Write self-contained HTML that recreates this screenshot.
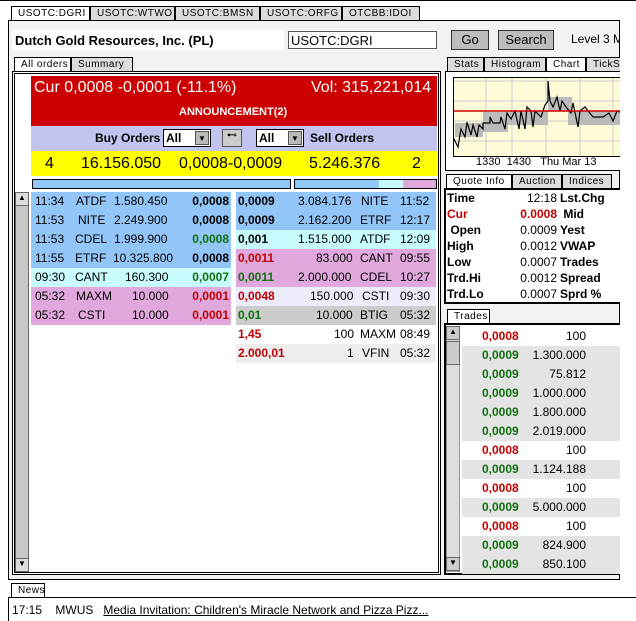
<!DOCTYPE html><html><head><style>
*{margin:0;padding:0;box-sizing:border-box}
body{width:636px;height:621px;background:#fff;font-family:"Liberation Sans",sans-serif;font-size:12px;position:relative;overflow:hidden}
.a{position:absolute}
.tab{position:absolute;height:14px;border:1px solid #000;border-bottom:none;background:#ddd;font-size:10px;letter-spacing:.5px;padding:1px 0 0 6px;white-space:nowrap}
.tab.on{background:#fff}
.b{font-weight:bold}
.row{position:absolute;height:19px;font-size:12px;line-height:19px;white-space:nowrap;overflow:hidden}
.row span{position:absolute}
.r{color:#c00000}.g{color:#107010}
.sb{position:absolute;background:#ccc;border:1px solid #666}
.btn{position:absolute;background:#bdbdbd;border:1px solid #333;font-size:13px;text-align:center;line-height:18px}
</style></head><body>
<div class="a" style="left:0;top:0;width:636px;height:2px;border-top:1px solid #000"></div>
<div class="a" style="left:8px;top:20px;width:612px;height:560px;background:#f2f2f2;border:1px solid #000"></div>
<div class="tab on" style="left:11px;top:6px;width:79px">USOTC:DGRI</div>
<div class="tab" style="left:90px;top:6px;width:85px">USOTC:WTWO</div>
<div class="tab" style="left:175px;top:6px;width:85px">USOTC:BMSN</div>
<div class="tab" style="left:260px;top:6px;width:82px">USOTC:ORFG</div>
<div class="tab" style="left:342px;top:6px;width:78px">OTCBB:IDOI</div>
<div class="a" style="left:12px;top:30px;width:272px;height:20px;background:#fff"></div>
<div class="a b" style="left:15px;top:33px;font-size:13px">Dutch Gold Resources, Inc. (PL)</div>
<div class="a" style="left:288px;top:31px;width:149px;height:18px;background:#fff;border:1px solid #555;font-size:13px;padding:1px 2px">USOTC:DGRI</div>
<div class="btn" style="left:451px;top:30px;width:38px;height:20px">Go</div>
<div class="btn" style="left:498px;top:30px;width:56px;height:20px">Search</div>
<div class="a" style="left:571px;top:32px;font-size:12px;white-space:nowrap">Level 3 M</div>
<div class="tab on" style="left:14px;top:57px;width:57px">All orders</div>
<div class="tab" style="left:71px;top:57px;width:62px">Summary</div>
<div class="a" style="left:12px;top:71px;width:429px;height:504px;background:#fff;border:3px double #000"></div>
<div class="a" style="left:31px;top:76px;width:406px;height:50px;background:#cc0000"></div>
<div class="a" style="left:34px;top:79px;color:#fff;font-size:16px">Cur 0,0008 -0,0001 (-11.1%)</div>
<div class="a" style="left:311px;top:79px;color:#fff;font-size:16px">Vol: 315,221,014</div>
<div class="a b" style="left:179px;top:106px;color:#fff;font-size:11px">ANNOUNCEMENT(2)</div>
<div class="a" style="left:31px;top:126px;width:406px;height:25px;background:#c0c4ee"></div>
<div class="a b" style="left:95px;top:131px;font-size:12px">Buy Orders</div>
<div class="a b" style="left:163px;top:129px;width:48px;height:18px;background:#fff;border:1px solid #000;font-size:12px;padding:1px 2px">All<div class="a" style="right:1px;top:1px;width:14px;height:14px;background:#bbb;border:1px solid #555;font-size:8px;text-align:center;line-height:13px">▼</div></div>
<div class="a" style="left:222px;top:129px;width:20px;height:18px;background:#ccc;border:1px solid #555;font-size:10px;text-align:center">⊷</div>
<div class="a b" style="left:256px;top:129px;width:48px;height:18px;background:#fff;border:1px solid #000;font-size:12px;padding:1px 2px">All<div class="a" style="right:1px;top:1px;width:14px;height:14px;background:#bbb;border:1px solid #555;font-size:8px;text-align:center;line-height:13px">▼</div></div>
<div class="a b" style="left:310px;top:131px;font-size:12px">Sell Orders</div>
<div class="a" style="left:31px;top:151px;width:406px;height:25px;background:#ffff00;font-size:16px;line-height:25px">
<span class="a" style="left:14px">4</span><span class="a" style="left:50px">16.156.050</span><span class="a" style="left:148px">0,0008-0,0009</span><span class="a" style="left:278px">5.246.376</span><span class="a" style="left:381px">2</span></div>
<div class="a" style="left:32px;top:179px;width:259px;height:10px;background:#92c6f8;border:1px solid #000"></div>
<div class="a" style="left:294px;top:179px;width:143px;height:10px;background:#92c6f8;border:1px solid #000"><div class="a" style="left:84px;top:0;width:24px;height:8px;background:#c8fcfc"></div><div class="a" style="left:108px;top:0;width:33px;height:8px;background:#e0a8dc"></div></div>
<div class="sb" style="left:15px;top:192px;width:14px;height:380px;background:#c8c8c8"></div>
<div class="sb" style="left:15px;top:192px;width:14px;height:14px;background:#ddd;font-size:8px;text-align:center">▲</div>
<div class="sb" style="left:15px;top:558px;width:14px;height:14px;background:#ddd;font-size:8px;text-align:center">▼</div>
<div class="row" style="left:31px;top:192px;width:200px;background:#92c6f8"><span style="left:4px">11:34</span><span style="left:45px">ATDF</span><span style="left:83px">1.580.450</span><span class="b" style="right:2px">0,0008</span></div>
<div class="row" style="left:31px;top:211px;width:200px;background:#92c6f8"><span style="left:4px">11:53</span><span style="left:47px">NITE</span><span style="left:83px">2.249.900</span><span class="b" style="right:2px">0,0008</span></div>
<div class="row" style="left:31px;top:230px;width:200px;background:#92c6f8"><span style="left:4px">11:53</span><span style="left:44px">CDEL</span><span style="left:83px">1.999.900</span><span class="b g" style="right:2px">0,0008</span></div>
<div class="row" style="left:31px;top:249px;width:200px;background:#92c6f8"><span style="left:4px">11:55</span><span style="left:44px">ETRF</span><span style="left:82px;width:70px;overflow:hidden">10.325.800</span><span class="b" style="right:2px">0,0008</span></div>
<div class="row" style="left:31px;top:268px;width:200px;background:#c8fcfc"><span style="left:4px">09:30</span><span style="left:44px">CANT</span><span style="left:94px">160.300</span><span class="b g" style="right:2px">0,0007</span></div>
<div class="row" style="left:31px;top:287px;width:200px;background:#e0a8dc"><span style="left:4px">05:32</span><span style="left:45px">MAXM</span><span style="left:101px">10.000</span><span class="b r" style="right:2px">0,0001</span></div>
<div class="row" style="left:31px;top:306px;width:200px;background:#e0a8dc"><span style="left:4px">05:32</span><span style="left:47px">CSTI</span><span style="left:101px">10.000</span><span class="b r" style="right:2px">0,0001</span></div>
<div class="row" style="left:236px;top:192px;width:200px;background:#92c6f8"><span class="b" style="left:2px">0,0009</span><span style="left:62px">3.084.176</span><span style="left:125px">NITE</span><span style="left:164px">11:52</span></div>
<div class="row" style="left:236px;top:211px;width:200px;background:#92c6f8"><span class="b" style="left:2px">0,0009</span><span style="left:62px">2.162.200</span><span style="left:124px">ETRF</span><span style="left:164px">12:17</span></div>
<div class="row" style="left:236px;top:230px;width:200px;background:#c8fcfc"><span class="b" style="left:2px">0,001</span><span style="left:62px">1.515.000</span><span style="left:124px">ATDF</span><span style="left:164px">12:09</span></div>
<div class="row" style="left:236px;top:249px;width:200px;background:#e0a8dc"><span class="b r" style="left:2px">0,0011</span><span style="left:80px">83.000</span><span style="left:124px">CANT</span><span style="left:164px">09:55</span></div>
<div class="row" style="left:236px;top:268px;width:200px;background:#e0a8dc"><span class="b g" style="left:2px">0,0011</span><span style="left:62px">2.000.000</span><span style="left:124px">CDEL</span><span style="left:164px">10:27</span></div>
<div class="row" style="left:236px;top:287px;width:200px;background:#ececfa"><span class="b r" style="left:2px">0,0048</span><span style="left:74px">150.000</span><span style="left:126px">CSTI</span><span style="left:164px">09:30</span></div>
<div class="row" style="left:236px;top:306px;width:200px;background:#cccccc"><span class="b g" style="left:2px">0,01</span><span style="left:80px">10.000</span><span style="left:124px">BTIG</span><span style="left:164px">05:32</span></div>
<div class="row" style="left:236px;top:325px;width:200px;background:#fff"><span class="b r" style="left:2px">1,45</span><span style="left:98px">100</span><span style="left:124px">MAXM</span><span style="left:164px">08:49</span></div>
<div class="row" style="left:236px;top:344px;width:200px;background:#eee"><span class="b r" style="left:2px">2.000,01</span><span style="left:111px">1</span><span style="left:126px">VFIN</span><span style="left:164px">05:32</span></div>
<div class="tab" style="left:447px;top:57px;width:37px">Stats</div>
<div class="tab" style="left:484px;top:57px;width:62px">Histogram</div>
<div class="tab on" style="left:546px;top:57px;width:40px">Chart</div>
<div class="tab" style="left:586px;top:57px;width:40px">TickS</div>
<div class="a" style="left:445px;top:71px;width:180px;height:100px;background:#fff;border:1px solid #000"></div>
<svg class="a" style="left:453px;top:77px" width="170" height="80">
<rect width="170" height="80" fill="#fffbd8"/>
<g stroke="#ccc" stroke-width="1"><line x1="33" y1="0" x2="33" y2="80"/><line x1="59" y1="0" x2="59" y2="80"/><line x1="93" y1="0" x2="93" y2="80"/><line x1="127" y1="0" x2="127" y2="80"/><line x1="160" y1="0" x2="160" y2="80"/><line x1="0" y1="4" x2="170" y2="4"/><line x1="0" y1="24" x2="170" y2="24"/><line x1="0" y1="44" x2="170" y2="44"/><line x1="0" y1="64" x2="170" y2="64"/></g>
<g fill="#bbb"><rect x="2" y="46" width="28" height="14"/><rect x="30" y="35" width="25" height="20"/><rect x="55" y="34" width="40" height="14"/><rect x="95" y="20" width="24" height="14"/><rect x="115" y="34" width="55" height="14"/></g>
<polyline fill="none" stroke="#000" stroke-width="1.2" points="0,75 0,60 5,70 8,52 12,60 14,45 18,58 20,48 24,60 26,48 30,52 30,46 37,46 37,40 40,46 47,46 48,40 52,52 54,36 58,42 62,34 66,52 68,34 72,52 74,30 78,34 80,50 82,34 88,40 92,28 95,24 95,4 97,24 100,30 104,20 107,34 109,24 113,30 118,36 120,26 125,50 127,34 132,30 140,40 150,40 156,36 160,44 164,34 170,36"/>
<line x1="0" y1="34" x2="170" y2="34" stroke="#d00000" stroke-width="1.5"/>
<rect x="0.5" y="0.5" width="169" height="79" fill="none" stroke="#000"/>
</svg>
<div class="a" style="left:476px;top:156px;font-size:11px;white-space:nowrap">1330&nbsp;&nbsp;1430&nbsp;&nbsp;&nbsp;Thu Mar 13&nbsp;&nbsp;&nbsp;&nbsp;&nbsp;&nbsp;&nbsp;&nbsp;&nbsp;1130</div>
<div class="tab on" style="left:446px;top:174px;width:66px">Quote Info</div>
<div class="tab" style="left:512px;top:174px;width:50px">Auction</div>
<div class="tab" style="left:562px;top:174px;width:50px">Indices</div>
<div class="a" style="left:444px;top:188px;width:180px;height:116px;background:#fff;border:2px solid #000"></div>
<div class="a" style="left:447px;top:190px;font-size:12px;line-height:16px;width:175px">
<div class="b">Time</div><div class="b r">Cur</div><div class="b">&nbsp;Open</div><div class="b">High</div><div class="b">Low</div><div class="b">Trd.Hi</div><div class="b">Trd.Lo</div></div>
<div class="a" style="left:490px;top:190px;font-size:12px;line-height:16px;width:67px;text-align:right">
<div>12:18</div><div class="b r">0.0008</div><div>0.0009</div><div>0.0012</div><div>0.0007</div><div>0.0012</div><div>0.0007</div></div>
<div class="a b" style="left:560px;top:190px;font-size:12px;line-height:16px;white-space:nowrap">
<div>Lst.Chg</div><div>&nbsp;Mid</div><div>Yest</div><div>VWAP</div><div>Trades</div><div>Spread</div><div>Sprd %</div></div>
<div class="tab on" style="left:447px;top:309px;width:43px">Trades</div>
<div class="a" style="left:444px;top:323px;width:180px;height:252px;background:#fff;border:2px solid #000"></div>
<div class="sb" style="left:446px;top:326px;width:14px;height:246px;background:#ddd;border-color:#999"></div>
<div class="sb" style="left:446px;top:326px;width:14px;height:14px;font-size:8px;text-align:center">▲</div>
<div class="sb" style="left:446px;top:341px;width:14px;height:24px"></div>
<div class="sb" style="left:446px;top:557px;width:14px;height:14px;font-size:8px;text-align:center">▼</div>
<div class="a" style="left:462px;top:327px;width:160px">
<div class="row" style="position:relative;background:#fff"><span class="b r" style="left:20px">0,0008</span><span style="right:36px">100</span></div>
<div class="row" style="position:relative;background:#e4e4e4"><span class="b g" style="left:20px">0,0009</span><span style="right:36px">1.300.000</span></div>
<div class="row" style="position:relative;background:#e4e4e4"><span class="b g" style="left:20px">0,0009</span><span style="right:36px">75.812</span></div>
<div class="row" style="position:relative;background:#e4e4e4"><span class="b g" style="left:20px">0,0009</span><span style="right:36px">1.000.000</span></div>
<div class="row" style="position:relative;background:#e4e4e4"><span class="b g" style="left:20px">0,0009</span><span style="right:36px">1.800.000</span></div>
<div class="row" style="position:relative;background:#e4e4e4"><span class="b g" style="left:20px">0,0009</span><span style="right:36px">2.019.000</span></div>
<div class="row" style="position:relative;background:#fff"><span class="b r" style="left:20px">0,0008</span><span style="right:36px">100</span></div>
<div class="row" style="position:relative;background:#e4e4e4"><span class="b g" style="left:20px">0,0009</span><span style="right:36px">1.124.188</span></div>
<div class="row" style="position:relative;background:#fff"><span class="b r" style="left:20px">0,0008</span><span style="right:36px">100</span></div>
<div class="row" style="position:relative;background:#e4e4e4"><span class="b g" style="left:20px">0,0009</span><span style="right:36px">5.000.000</span></div>
<div class="row" style="position:relative;background:#fff"><span class="b r" style="left:20px">0,0008</span><span style="right:36px">100</span></div>
<div class="row" style="position:relative;background:#e4e4e4"><span class="b g" style="left:20px">0,0009</span><span style="right:36px">824.900</span></div>
<div class="row" style="position:relative;background:#e4e4e4"><span class="b g" style="left:20px">0,0009</span><span style="right:36px">850.100</span></div>
</div>
<div class="a" style="left:620px;top:20px;width:16px;height:601px;background:#fff"></div>
<div class="tab on" style="left:11px;top:583px;width:34px">News</div>
<div class="a" style="left:8px;top:597px;width:628px;height:24px;border-top:1px solid #000;border-left:1px solid #000;background:#fff"></div>
<div class="a" style="left:12px;top:603px;font-size:12px;white-space:nowrap">17:15&nbsp;&nbsp;&nbsp;&nbsp;MWUS&nbsp;&nbsp;&nbsp;<u>Media Invitation: Children's Miracle Network and Pizza Pizz...</u></div>
</body></html>
